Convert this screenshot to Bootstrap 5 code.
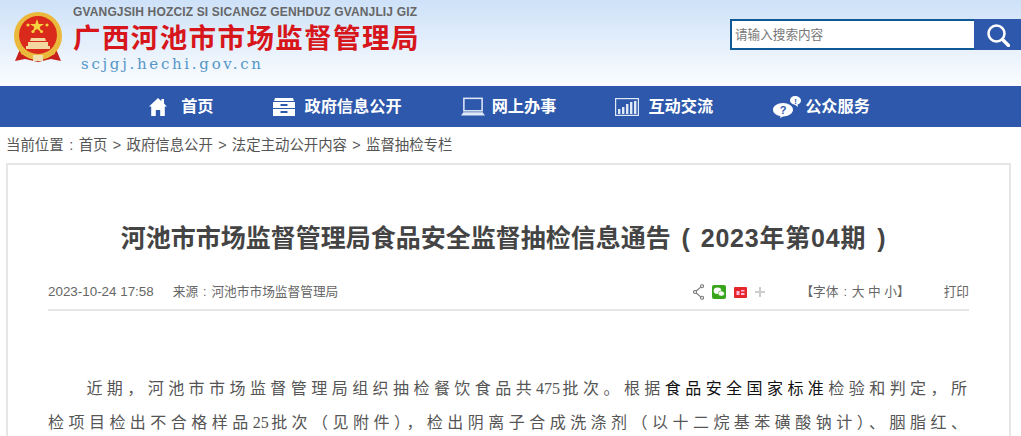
<!DOCTYPE html>
<html lang="zh-CN">
<head>
  <meta charset="UTF-8" />
  <meta name="viewport" content="width=device-width, initial-scale=1.0"/>
  <title>河池市市场监督管理局食品安全监督抽检信息通告</title>
  <link href="https://cdn.jsdelivr.net/npm/bootstrap@5.3.0/dist/css/bootstrap.min.css" rel="stylesheet"/>
  <style>
    html, body { height: 436px; overflow: hidden; }
    body {
      background: #fff;
      font-family: "Liberation Sans", "Noto Sans CJK SC", sans-serif;
      color: #555;
    }
    a { color: inherit; text-decoration: none; }
    /* centred full-width punctuation */
    .punct { display: inline-block; width: 1.05em; text-align: center; }
    .paren { display: inline-block; width: 30px; text-align: center; font-weight: 700; }

    /* header */
    .site-head {
      height: 86px;
      background: linear-gradient(#cde1f8, #fbfdff);
    }
    .emblem { margin: 11px 0 0 13px; flex: none; }
    .logo-words { margin-left: 10px; padding-top: 4px; }
    .logo-zh-py { font-size: 12px; font-weight: 700; color: #666; line-height: 17px; white-space: nowrap; letter-spacing: .15px; }
    .logo-title { font-size: 27.5px; font-weight: 700; color: #d7161c; line-height: 34px; letter-spacing: 1.4px; white-space: nowrap; margin-top: 1px; }
    .logo-url { font-family: "DejaVu Serif", serif; font-size: 15px; color: #5596c8; letter-spacing: 2.7px; line-height: 20px; margin-left: 8px; margin-top: -2px; }
    .search-box { width: 291px; margin-top: 19px; height: 31px; }
    .search-box .form-control {
      height: 31px; border: 2px solid #0f5a96; border-right: 0; border-radius: 0;
      padding: 0 3px; font-size: 12.6px; box-shadow: none;
    }
    .search-box .form-control::placeholder { color: #777; }
    .search-go { width: 47px; height: 31px; background: #2d58ab; border: 0; border-radius: 0; padding: 0; }

    /* nav */
    .main-bar { height: 41px; background: #2d58ab; padding-right: 2px; gap: 59px; }
    .main-bar a { color: #fff; font-size: 16.2px; font-weight: 700; line-height: 41px; white-space: nowrap; }
    .nav-home { gap: 14px; }
    .nav-gov { gap: 10px; }
    .nav-work { gap: 7px; }
    .nav-talk { gap: 9px; }
    .nav-serve { gap: 2px; }

    /* breadcrumb */
    .crumbs { height: 36px; font-size: 14.4px; line-height: 36px; padding-left: 6px; color: #555; white-space: nowrap; }
    .crumbs i { font-style: normal; margin: 0 5.3px; }

    /* article */
    .art-box { margin: 0 10px 0 6px; border: 2px solid #e6e6e6; border-bottom: 0; padding: 0 40px; height: 273px; }
    .art-title { font-size: 25px; font-weight: 700; color: #444; text-align: center; line-height: 36px; margin: 55px 0 0; white-space: nowrap; }
    .art-title .issue { letter-spacing: .8px; }
    .art-meta { font-size: 12.7px; color: #666; margin-top: 26px; border-bottom: 2px solid #e6e6e6; line-height: 20px; height: 29px; }
    .art-date { font-size: 13.4px; }
    .art-meta .from { margin-left: 19px; }
    .art-tools { margin-left: auto; }
    .font-size { margin-left: 35px; }
    .print-link { margin-left: 34px; }
    .art-text {
      margin: 61px 0 0; font-size: 16px; line-height: 34px; color: #555; letter-spacing: 2px;
      font-family: "Liberation Serif", "Noto Sans CJK SC", serif;
      text-indent: 2.4em; text-align: justify; text-align-last: justify; white-space: nowrap;
    }
    .art-text b { font-weight: 400; color: #111; }
    .art-text .num { letter-spacing: 0; }
  </style>
</head>
<body>

<!-- header -->
<header class="site-head d-flex justify-content-between">
  <div class="d-flex">
    <svg class="emblem" width="50" height="52" viewBox="0 0 50 52">
      <path d="M7 38 L2 50 L12 48 L25 51 L38 48 L48 50 L43 38Z" fill="#c8201c"/>
      <circle cx="25" cy="25" r="24" fill="#eab83a"/>
      <circle cx="25" cy="24" r="19" fill="#d92a1c"/>
      <polygon points="24,8 25.7,13 31,13 26.7,16 28.3,21 24,18 19.7,21 21.3,16 17,13 22.3,13" fill="#f5d33f"/>
      <circle cx="15" cy="14" r="1.6" fill="#f5d33f"/><circle cx="34" cy="14" r="1.6" fill="#f5d33f"/>
      <circle cx="20" cy="20.5" r="1.6" fill="#f5d33f"/><circle cx="28.5" cy="20.5" r="1.6" fill="#f5d33f"/>
      <path d="M18 27h14l1 3h-16zM15 31h20v4h2v3H13v-3h2z" fill="#f3d9a0"/>
      <path d="M8 40q17 9 34 0v3q-17 8-34 0z" fill="#eab83a"/>
      <path d="M20 44h10v6H20z" fill="#f0e2b0"/>
    </svg>
    <div class="logo-words">
      <div class="logo-zh-py">GVANGJSIH HOZCIZ SI SICANGZ GENHDUZ GVANJLIJ GIZ</div>
      <div class="logo-title">广西河池市市场监督管理局</div>
      <div class="logo-url">scjgj.hechi.gov.cn</div>
    </div>
  </div>
  <form class="input-group search-box flex-nowrap">
    <input type="text" class="form-control" placeholder="请输入搜索内容">
    <button class="btn search-go" type="button" aria-label="搜索">
      <svg width="24" height="24" viewBox="0 0 24 24" fill="none" stroke="#fff">
        <circle cx="10.5" cy="10.5" r="8" stroke-width="2.6"/>
        <path d="M16.5 16.5 22.5 22.5" stroke-width="3.4" stroke-linecap="round"/>
      </svg>
    </button>
  </form>
</header>

<!-- nav -->
<nav class="main-bar d-flex justify-content-center">
  <a href="#" class="d-flex align-items-center nav-home">
    <svg width="18" height="18" viewBox="0 0 18 18" fill="#fff"><path d="M9 0 0 8.5h2.2V18h4.600v-6h4.400v6h4.600V8.500H18L15 5.600V1h-2.600v2.200z"/></svg>
    <span>首页</span>
  </a>
  <a href="#" class="d-flex align-items-center nav-gov">
    <svg width="22" height="18" viewBox="0 0 22 18" fill="#fff"><path d="M2 0h18l1 3H1zM0 4h22v6H0zM0 11h22v7H0z"/><path d="M7.500 6h7v2h-7zM7.500 13h7v2h-7z" fill="#2d58ab"/></svg>
    <span>政府信息公开</span>
  </a>
  <a href="#" class="d-flex align-items-center nav-work">
    <svg width="24" height="19" viewBox="0 0 25 19" fill="none"><rect x="3" y="1" width="19" height="13" stroke="#dfe8f7" stroke-width="1.6"/><path d="M2.500 15.500h20l2.500 3.500H0z" fill="#dfe8f7"/></svg>
    <span>网上办事</span>
  </a>
  <a href="#" class="d-flex align-items-center nav-talk">
    <svg width="24" height="18" viewBox="0 0 24 18" fill="#fff"><rect x=".6" y=".6" width="22.8" height="16.8" fill="none" stroke="#dfe8f7" stroke-width="1.2"/><path d="M3 11h2.400v5H3zM7 9h2.400v7H7zM11 6h2.400v10H11zM15 4h2.400v12H15zM19 3h2.400v13H19z" fill="#dfe8f7"/></svg>
    <span>互动交流</span>
  </a>
  <a href="#" class="d-flex align-items-center nav-serve">
    <svg width="31" height="22" viewBox="0 0 31 22" fill="#fff">
      <path d="M11 7c5.500 0 10 3 10 6.700s-4.500 6.700-10 6.700l-3 1.600 .5-2C4 19.300 1 16.700 1 13.700 1 10 5.500 7 11 7z"/>
      <path d="M23 0c3 0 6 1.800 6 4.500 0 2-1.500 3.500-3.500 4L26 11l-3-2.300c-2.800-.4-5-2-5-4.200C18 1.800 20 0 23 0z"/>
      <text x="11" y="18" text-anchor="middle" font-size="11" font-weight="700" fill="#2d58ab" font-family="Liberation Sans">?</text>
      <text x="23.500" y="7.500" text-anchor="middle" font-size="8" font-weight="700" fill="#2d58ab" font-family="Liberation Sans">!</text>
    </svg>
    <span>公众服务</span>
  </a>
</nav>

<!-- breadcrumb -->
<div class="crumbs">当前位置<span class="punct">:</span><a href="#">首页</a><i>&gt;</i><a href="#">政府信息公开</a><i>&gt;</i><a href="#">法定主动公开内容</a><i>&gt;</i><a href="#">监督抽检专栏</a></div>

<!-- article -->
<main class="art-box">
  <h1 class="art-title">河池市市场监督管理局食品安全监督抽检信息通告<span class="paren">(</span><span class="issue">2023年第04期</span><span class="paren">)</span></h1>
  <div class="art-meta d-flex align-items-start">
    <span class="art-date">2023-10-24 17:58</span>
    <span class="from">来源<span class="punct">:</span>河池市市场监督管理局</span>
    <div class="art-tools d-flex align-items-center">
      <div class="d-flex align-items-center gap-2">
        <svg width="11" height="16" viewBox="0 0 11 16" fill="none" stroke="#777" stroke-width="1.100"><circle cx="9" cy="2.200" r="1.500"/><circle cx="2" cy="8" r="1.500"/><circle cx="9" cy="13.800" r="1.500"/><path d="M7.800 3.200 3.200 7M3.200 9l4.600 3.800"/></svg>
        <svg width="14" height="14" viewBox="0 0 14 14"><rect width="14" height="14" rx="2" fill="#39a51a"/><ellipse cx="5.500" cy="5.800" rx="3.800" ry="3.200" fill="#fff"/><ellipse cx="9.300" cy="8.500" rx="3.100" ry="2.600" fill="#fff" stroke="#39a51a" stroke-width=".6"/></svg>
        <svg width="13" height="11" viewBox="0 0 13 11"><rect width="13" height="11" rx="1" fill="#e5262b"/><path d="M2.500 4h3v4h-3zM7 3h3.500v1.500H7zM7 6h3.500v2H7z" fill="#fbd"/></svg>
        <svg width="10" height="10" viewBox="0 0 10 10" fill="#ccc"><path d="M4 0h2v4h4v2H6v4H4V6H0V4h4z"/></svg>
      </div>
      <span class="font-size">【字体<span class="punct">:</span><a href="#">大</a> <a href="#">中</a> <a href="#">小</a>】</span>
      <a href="#" class="print-link">打印</a>
    </div>
  </div>
  <p class="art-text">近期，河池市市场监督管理局组织抽检餐饮食品共<span class="num">475</span>批次。根据<b>食品安全国家标准</b>检验和判定，所<br>检项目检出不合格样品<span class="num">25</span>批次（见附件），检出阴离子合成洗涤剂（以十二烷基苯磺酸钠计）、胭脂红、</p>
</main>

<script src="https://cdn.jsdelivr.net/npm/bootstrap@5.3.0/dist/js/bootstrap.bundle.min.js"></script>
</body>
</html>
